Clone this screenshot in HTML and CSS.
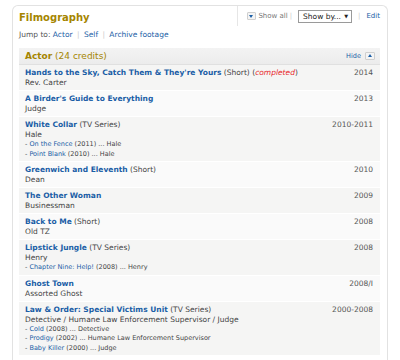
FILE: index.html
```
<!DOCTYPE html>
<html lang="en">

<head>
    <meta charset="UTF-8">
    <title>Filmography</title>
    <link rel="stylesheet" href="styles.css">
</head>

<body>
    <div class="card">
        <!-- Card header: title, jump links and tools -->
        <div class="card-head">
            <div class="head-left">
                <h2>Filmography</h2>
                <div class="jump">Jump to: <a href="#">Actor</a> <span class="sep">|</span> <a href="#">Self</a> <span class="sep">|</span> <a href="#">Archive footage</a></div>
            </div>
            <div class="tools">
                <span class="icon-box down"></span>
                <span class="show-all">Show all</span>
                <span class="sep">|</span>
                <div class="show-by">Show by... <span class="arrow">&#9660;</span></div>
                <span class="sep">|</span>
                <a href="#" class="edit">Edit</a>
            </div>
        </div>

        <!-- Actor section -->
        <div class="section-head">
            <div><b>Actor</b> (24 credits)</div>
            <div class="hide"><a href="#">Hide</a> <span class="icon-box up"></span></div>
        </div>

        <div class="row odd">
            <div class="info">
                <a href="#" class="title">Hands to the Sky, Catch Them &amp; They're Yours</a> (Short) (<i class="status">completed</i>)
                <div>Rev. Carter</div>
            </div>
            <div class="year">2014</div>
        </div>
        <div class="row even">
            <div class="info">
                <a href="#" class="title">A Birder's Guide to Everything</a>
                <div>Judge</div>
            </div>
            <div class="year">2013</div>
        </div>
        <div class="row odd">
            <div class="info">
                <a href="#" class="title">White Collar</a> (TV Series)
                <div>Hale</div>
                <div class="ep">- <a href="#">On the Fence</a> (2011) ... Hale</div>
                <div class="ep">- <a href="#">Point Blank</a> (2010) ... Hale</div>
            </div>
            <div class="year">2010-2011</div>
        </div>
        <div class="row even">
            <div class="info">
                <a href="#" class="title">Greenwich and Eleventh</a> (Short)
                <div>Dean</div>
            </div>
            <div class="year">2010</div>
        </div>
        <div class="row odd">
            <div class="info">
                <a href="#" class="title">The Other Woman</a>
                <div>Businessman</div>
            </div>
            <div class="year">2009</div>
        </div>
        <div class="row even">
            <div class="info">
                <a href="#" class="title">Back to Me</a> (Short)
                <div>Old TZ</div>
            </div>
            <div class="year">2008</div>
        </div>
        <div class="row odd">
            <div class="info">
                <a href="#" class="title">Lipstick Jungle</a> (TV Series)
                <div>Henry</div>
                <div class="ep">- <a href="#">Chapter Nine: Help!</a> (2008) ... Henry</div>
            </div>
            <div class="year">2008</div>
        </div>
        <div class="row even">
            <div class="info">
                <a href="#" class="title">Ghost Town</a>
                <div>Assorted Ghost</div>
            </div>
            <div class="year">2008/I</div>
        </div>
        <div class="row odd">
            <div class="info">
                <a href="#" class="title">Law &amp; Order: Special Victims Unit</a> (TV Series)
                <div>Detective / Humane Law Enforcement Supervisor / Judge</div>
                <div class="ep">- <a href="#">Cold</a> (2008) ... Detective</div>
                <div class="ep">- <a href="#">Prodigy</a> (2002) ... Humane Law Enforcement Supervisor</div>
                <div class="ep">- <a href="#">Baby Killer</a> (2000) ... Judge</div>
            </div>
            <div class="year">2000-2008</div>
        </div>
    </div>
</body>

</html>
```

FILE: styles.css
```
body {
    margin: 0;
    padding: 5px 12px 0 12px;
    background-color: #ffffff;
    font-family: "DejaVu Sans", Verdana, sans-serif;
    color: #333333;
}

a {
    color: #1a5ea6;
    text-decoration: none;
}

/* Outer card */
.card {
    border: 1px solid #e2e2e2;
    border-bottom: none;
    border-radius: 6px 6px 0 0;
    padding: 0 7px 0 6px;
    height: 400px;
}

.card-head {
    display: flex;
    justify-content: space-between;
    height: 41px;
}

.head-left h2 {
    margin: 6px 0 0 0;
    font-size: 10px;
    color: #a58500;
}

.jump {
    margin-top: 7px;
    font-size: 7.5px;
    color: #555555;
}

.sep {
    color: #cccccc;
    margin: 0 2px;
}

/* Tools at the top right */
.tools {
    display: flex;
    align-items: center;
    height: 20px;
    border-left: 1px solid #e6e6e6;
    padding-left: 9px;
    font-size: 7px;
    color: #777777;
    white-space: nowrap;
}

.icon-box {
    display: inline-block;
    width: 7px;
    height: 6px;
    border: 1px solid #cfcfcf;
    border-radius: 1px;
    background: #f4f4f4;
    position: relative;
    vertical-align: middle;
}

.icon-box::after {
    content: "";
    position: absolute;
    left: 1px;
    border-left: 2.5px solid transparent;
    border-right: 2.5px solid transparent;
}

.icon-box.down::after {
    top: 2px;
    border-top: 3px solid #1a5ea6;
}

.icon-box.up::after {
    top: 1px;
    border-bottom: 3px solid #1a5ea6;
}

.show-all {
    margin-left: 2px;
}

.show-by {
    margin: 0 4px;
    border: 1px solid #9a9a9a;
    background: #ffffff;
    color: #222222;
    font-size: 7.5px;
    line-height: 9px;
    padding: 1px 3px 1px 4px;
    width: 45px;
    display: flex;
    justify-content: space-between;
    align-items: center;
}

.show-by .arrow {
    font-size: 5px;
}

.edit {
    margin-left: 4px;
    font-size: 7px;
}

/* Section header */
.section-head {
    display: flex;
    justify-content: space-between;
    align-items: center;
    height: 16px;
    margin-top: 1px;
    padding: 0 5px 0 6px;
    background: linear-gradient(#f3f3f3, #ececec);
    border-bottom: 1px solid #e0e0e0;
    font-size: 9px;
    color: #a58500;
}

.hide {
    font-size: 6.5px;
}

.hide .icon-box {
    margin-left: 2px;
    width: 8px;
}

.hide .icon-box::after {
    left: 1.5px;
}

/* Credit rows */
.row {
    display: flex;
    justify-content: space-between;
    padding: 3px 7px 2px 6px;
    border-bottom: 1px solid #ffffff;
    font-size: 7.5px;
    line-height: 10px;
    color: #444444;
}

.row.odd {
    background-color: #f5f5f4;
}

.row.even {
    background-color: #fafafa;
}

.title {
    font-weight: bold;
}

.status {
    color: #e8262b;
}

.year {
    color: #555555;
}

.ep {
    font-size: 6.5px;
    line-height: 9.5px;
}
```
